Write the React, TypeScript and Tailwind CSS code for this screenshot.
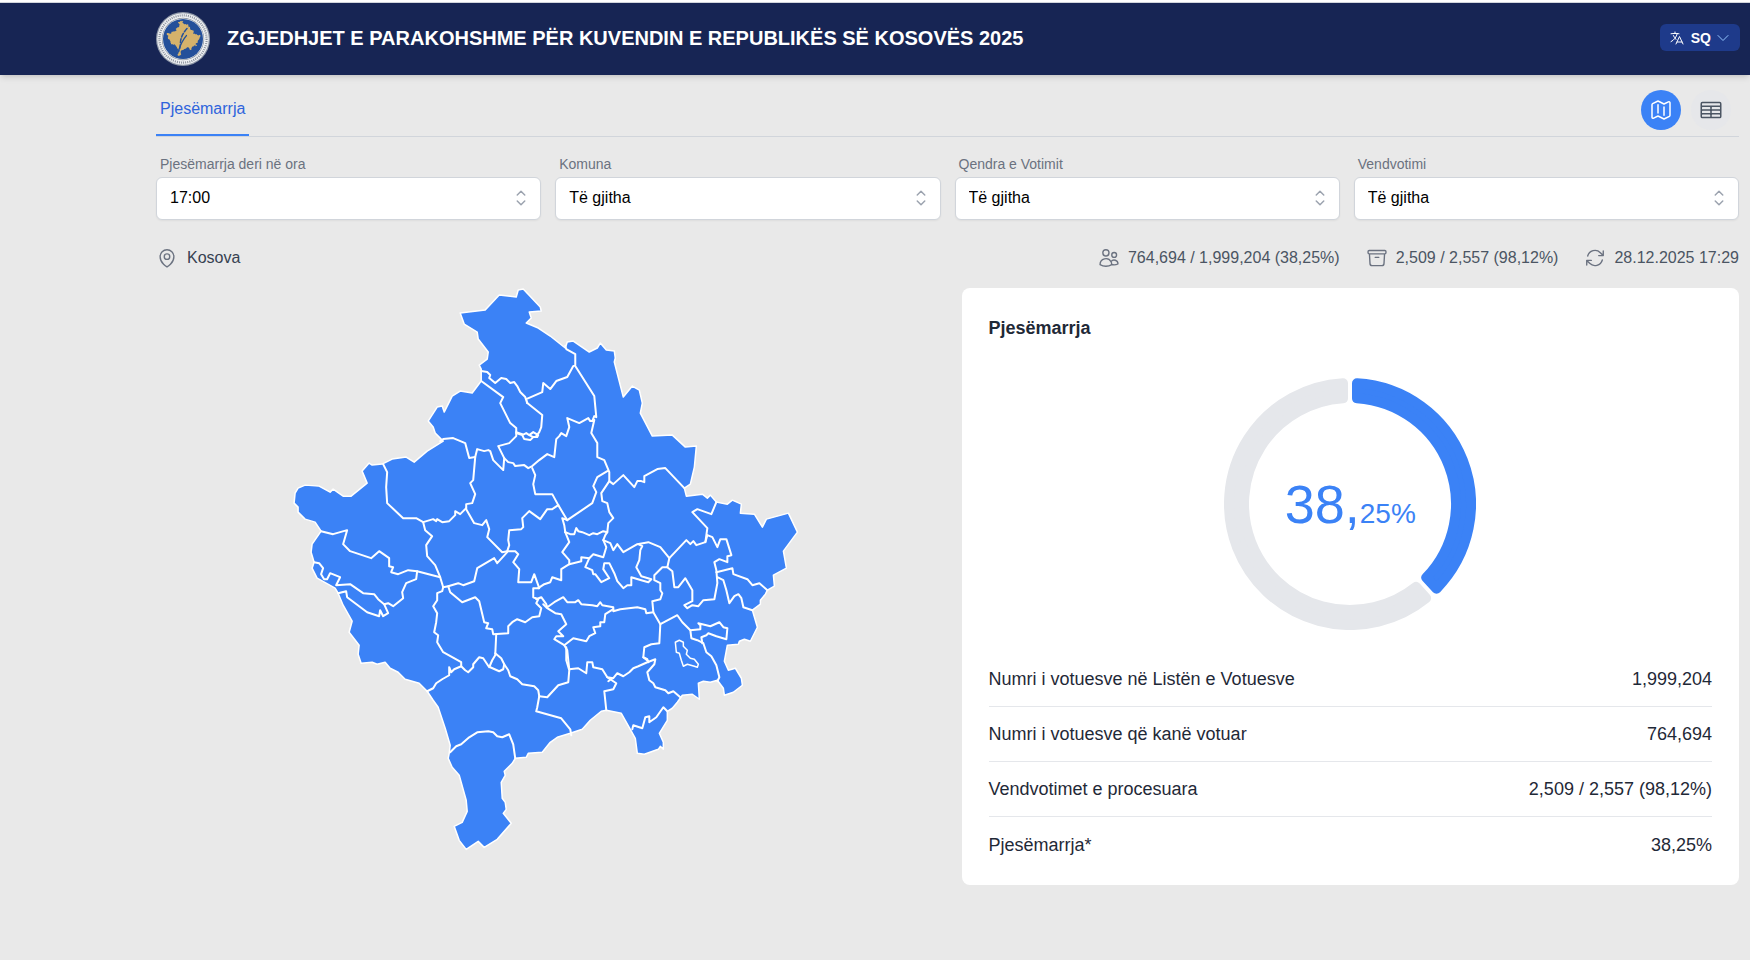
import { useState } from 'react';
import {
    HiOutlineArchiveBox,
    HiOutlineArrowPath,
    HiOutlineChevronDown,
    HiOutlineChevronUpDown,
    HiOutlineLanguage,
    HiOutlineMap,
    HiOutlineMapPin,
    HiOutlineTableCells,
    HiOutlineUsers,
} from 'react-icons/hi2';
import clsx from 'clsx';

const TURNOUT = 38.25;

const FILTERS = [
    { id: 'hour', label: 'Pjesëmarrja deri në ora', options: ['17:00'] },
    { id: 'municipality', label: 'Komuna', options: ['Të gjitha'] },
    { id: 'center', label: 'Qendra e Votimit', options: ['Të gjitha'] },
    { id: 'station', label: 'Vendvotimi', options: ['Të gjitha'] },
];

const STATS = [
    { icon: HiOutlineUsers, text: '764,694 / 1,999,204 (38,25%)' },
    { icon: HiOutlineArchiveBox, text: '2,509 / 2,557 (98,12%)' },
    { icon: HiOutlineArrowPath, text: '28.12.2025 17:29' },
];

const ROWS = [
    { label: 'Numri i votuesve në Listën e Votuesve', value: '1,999,204' },
    { label: 'Numri i votuesve që kanë votuar', value: '764,694' },
    { label: 'Vendvotimet e procesuara', value: '2,509 / 2,557 (98,12%)' },
    { label: 'Pjesëmarrja*', value: '38,25%' },
];

const COUNTRY =
    'M460 313 485 310 499 295 516 297 518 290 523 289 540 307 541 311 529 312 531 318 526 323 538 328 550 336 565 348 567 342 573 341 589 352 597 348 600 343 606 350 614 351 615 358 614 362 623 397 632 386 639 390 642 403 640 413 652 436 672 435 685 447 696 446 694 467 690 484 684 488 686 496 702 494 707 498 710 495 716 502 727 504 732 500 741 504 740 513 754 514 762 527 766 519 788 513 797 532 783 551 786 568 773 575 774 586 767 590 765 594 760 600 760 604 752 610 757 627 750 641 744 639 739 641 738 644 727 645 724 661 728 670 735 668 741 678 742 685 733 692 724 695 723 688 717 680 710 682 703 681 698 683 699 699 692 694 682 695 677 702 672 708 667 711 667 720 659 733 663 742 663 749 660 746 658 749 644 754 637 753 635 738 630 729 621 713 606 710 601 711 590 720 582 729 570 733 557 737 550 742 542 752 528 753 526 757 515 758 512 763 504 771 505 775 501 782 502 798 505 802 506 809 503 813 511 823 497 839 484 847 478 841 466 849 459 840 454 826 462 822 467 811 466 800 459 775 452 767 448 758 449 753 450 745 445 728 438 707 433 700 427 691 419 683 405 679 398 672 390 668 385 662 377 664 372 662 361 663 358 654 359 645 349 632 352 621 343 605 338 593 335 588 317 578 312 568 314 562 311 552 312 544 321 531 315 522 305 519 298 512 298 507 294 503 295 493 298 488 305 485 319 486 330 492 333 489 343 496 351 496 367 483 362 471 369 463 372 465 382 464 392 459 406 457 414 462 427 451 443 441 435 433 433 427 428 421 437 407 442 406 444 412 452 396 460 391 472 393 481 381 481 369 479 365 487 359 488 352 478 339 477 332 464 324Z';

// municipality boundaries, drawn over the country shape
const BORDERS = [
    'M481 371 487 372 490 375 489 378 495 383 501 378 506 379 510 383 514 382 517 386 520 392 525 397 527 403 526 399 542 392 543 383 550 389 556 381 567 377 573 366 575 365 575 354 566 349 565 346',
    'M481 381 503 397 500 403 510 423 516 428 516 432 522 434 M536 436 539 432 541 427 542 415 527 403',
    'M516 432 516 436 509 443 498 446 504 458 508 462 513 463 515 466 524 465 528 468 532 466 539 460 547 454 554 457 556 439 559 436 561 433 566 436 569 427 567 418 579 423 588 418 590 421 592 421 594 416 596 417 594 396 575 366',
    'M516 433 522 435 526 433 529 435 533 432 538 435 537 437 532 437 M522 435 524 439 530 440 533 437 529 435',
    'M594 420 591 433 597 443 597 457 604 460 609 472 609 481 601 493 602 501 607 503 609 512 613 518 608 523 607 532 603 531 597 534 593 533 589 535 582 532 578 531 576 528 574 534 570 534 565 532',
    'M565 532 564 525 562 518 567 520 592 503 596 492 593 486 597 477 607 471',
    'M609 481 613 484 623 475 634 487 637 481 641 481 644 482 644 476 657 469 665 468 684 488',
    'M532 468 535 475 533 484 535 494 552 494 558 505 567 520',
    'M558 505 552 509 547 509 540 519 529 511 522 518 523 527 521 529 509 530 508 540 509 545 507 551 502 552 487 537 489 529 486 520 482 525 474 523 466 509',
    'M504 458 503 470 493 460 490 451 488 450 484 451 477 449 475 457 473 480 470 483 475 494 472 503 466 504 466 508',
    'M475 457 469 458 465 443 453 438 443 439 440 441',
    'M383 464 387 472 386 487 387 503 403 518 416 518 423 522 433 519 436 521 437 519 442 522 449 521 455 515 455 511 460 514 466 508',
    'M423 522 425 530 432 536 426 545 427 556 435 565 440 577',
    'M321 531 333 534 347 530 343 544 350 551 371 558 379 551 389 558 389 566 393 567 391 572 398 574 408 570 417 571 440 577 443 587 448 586 458 583 463 585 474 581 477 568 494 558 497 563 507 552',
    'M443 587 442 591 437 593 437 600 433 606 437 613 436 622 434 632 438 635 437 642 443 652 461 662 461 666 454 669 451 672 449 667 449 675 442 679 436 683 433 688 427 691',
    'M461 666 465 670 468 672 473 667 473 664 479 657 483 658 489 667 492 660 495 655 496 634',
    'M495 653 501 658 504 664 503 669 499 671 490 667',
    'M504 664 508 670 510 676 517 679 522 684 534 686 538 690 539 696 537 707 536 711 561 718 570 729 571 735',
    'M539 696 547 697 558 685 568 682 569 670 566 660 566 647',
    'M448 586 450 592 462 602 475 597 479 601 484 622 488 623 486 628 492 629 493 634 508 633 508 626 512 622 517 619 525 622 532 617 539 616 541 608 536 603 538 599 533 597 533 588 539 588 534 574 531 582 518 582 519 569 513 562 518 554 515 551 507 551',
    'M538 588 544 584 550 582 552 577 561 580 561 569 569 564 569 560 562 552 569 542 565 532',
    'M569 564 581 561 581 557 589 558 593 554 603 557 606 547 603 540 605 535 607 532',
    'M603 540 610 543 613 550 617 544 623 552 637 544 648 542 660 547 669 558 686 540 690 544 693 541 696 545 705 542 707 528 692 512 697 509 711 514 716 502',
    'M589 558 585 567 592 570 593 574 595 574 601 582 609 578 603 569 604 563 609 563 614 573 617 581 623 588 627 585 631 585 631 577 641 580 648 582 651 579 641 576 636 567 639 560 640 550 642 546 638 544',
    'M669 558 667 567 662 567 654 575 654 580 660 583 660 590 662 593 660 599 652 601 653 612 660 624 659 643 651 644 644 647 643 657 648 661',
    'M667 567 672 571 674 587 678 587 685 578 692 590 692 601 684 605 687 608 692 605 698 606 703 600 714 599 717 583 716 570 714 562 719 559 727 562 727 556 731 555 726 539 720 539 717 547 712 537 707 535 705 542',
    'M716 572 732 568 733 574 747 579 752 585 759 583 767 590',
    'M717 577 723 580 726 590 729 603 734 596 738 594 741 598 743 607 752 610',
    'M536 599 541 597 546 604 547 607 554 602 563 597 567 602 575 602 578 600 581 604 592 605 597 606 600 602 602 605 613 607 613 611 620 609 637 607 645 609 646 613 653 612',
    'M613 609 605 614 604 622 600 622 600 626 593 627 595 633 589 636 586 641 573 638 564 645 554 639 556 636 563 636 558 631 566 624 561 614 555 613 547 608 543 604',
    'M564 645 567 650 568 660 569 669 578 668 586 673 587 662 592 662 593 667 602 669 607 677 613 678 617 673 623 676 629 672 633 668 638 666 647 662 655 659 654 664 647 672 649 680 653 683 655 687 665 690 668 693 673 691 680 697',
    'M643 657 647 659 648 662 M660 624 677 615 682 622 690 630 691 638 697 640 703 643 706 652 711 656 716 665 719 677 717 681',
    'M607 677 616 683 613 689 604 691 606 710 M612 678 608 681',
    'M632 729 633 725 642 728 645 717 649 716 649 722 656 717 663 707 667 711',
    'M690 630 700 629 700 625 698 623 710 626 719 622 723 627 727 628 726 639 716 636 708 633 706 635 701 637 702 643',
    'M314 562 319 563 323 568 321 574 324 579 327 579 330 573 340 577 336 585 350 584 363 593 374 594 378 599 384 604 388 603 393 606 403 598 402 592 406 583 416 579 417 571',
    'M338 593 346 591 347 597 367 612 379 616 380 610 383 616 388 613 384 604',
    'M450 752 456 746 461 744 469 737 477 732 488 731 493 732 497 736 502 737 509 734 513 744 515 758',
];

const ENCLAVE =
    'M675 642 679 640 683 642 683 646 687 650 686 654 690 658 694 659 698 664 697 667 694 666 687 664 683 666 681 660 679 653 676 652Z';

function MunicipalityMap() {
    return (
        <svg viewBox="156 288 777 564" className="w-full" role="img" aria-label="Kosova">
            <path d={COUNTRY} fill="#3b82f6" stroke="#ffffff" strokeWidth="1.5" strokeLinejoin="round" />
            <g fill="none" stroke="#ffffff" strokeWidth="2" strokeLinejoin="round" strokeLinecap="round">
                {BORDERS.map((d, i) => (
                    <path key={i} d={d} />
                ))}
            </g>
            <path d={ENCLAVE} fill="none" stroke="#ffffff" strokeWidth="1.5" strokeLinejoin="round" />
        </svg>
    );
}

function Emblem() {
    return (
        <svg viewBox="0 0 54 54" className="size-[54px] shrink-0" aria-hidden="true">
            <circle cx="27" cy="27" r="27" fill="#8f98a8" />
            <circle cx="27" cy="27" r="25.8" fill="#eef0f2" />
            <circle cx="27" cy="27" r="23.6" fill="none" stroke="#8b929e" strokeWidth="2.2" strokeDasharray="1 1.1" />
            <circle cx="27" cy="27" r="21.2" fill="#7d8694" />
            <circle cx="27" cy="27" r="20.6" fill="#f3f4f5" />
            <circle cx="27" cy="27" r="20" fill="#24509a" />
            <g transform="translate(-9.200 -9.500) scale(0.0675 0.063)">
                <path d={COUNTRY} fill="#d5b26b" />
            </g>
            <g fill="none" stroke="#24509a" strokeLinecap="round">
                <path d="M31 16.500c-3.500 4-5.800 8-6.400 12.500-.4 3.500-.2 7-2 10.500" strokeWidth="1.500" strokeDasharray="4 2" />
                <path d="M18.500 33c1.200 1.800 2.700 3.500 3.700 6.500 2-6 4.800-12 8.300-16" strokeWidth="1.200" />
            </g>
        </svg>
    );
}

// The ring segment is inset by 5 on every side, a 10 wide round-joined stroke fills it out again.
function arc(from: number, to: number) {
    const outer = 121;
    const inner = 106;
    const point = (r: number, turn: number, pad: number) => {
        const a = turn * 2 * Math.PI + pad;
        return `${(126 + r * Math.sin(a)).toFixed(2)} ${(126 - r * Math.cos(a)).toFixed(2)}`;
    };
    const po = Math.asin(7 / outer);
    const pi = Math.asin(7 / inner);
    const large = to - from > 0.5 ? 1 : 0;
    return `M${point(outer, from, po)}A${outer} ${outer} 0 ${large} 1 ${point(outer, to, -po)}L${point(inner, to, -pi)}A${inner} ${inner} 0 ${large} 0 ${point(inner, from, pi)}Z`;
}

function TurnoutDonut({ value }: { value: number }) {
    const [whole, rest] = value.toFixed(2).split('.');
    return (
        <div className="relative size-[252px]">
            <svg viewBox="0 0 252 252" className="size-full" strokeWidth="10" strokeLinejoin="round">
                <path d={arc(0, value / 100)} className="fill-[#3b82f6] stroke-[#3b82f6]" />
                <path d={arc(value / 100, 1)} className="fill-[#e5e7eb] stroke-[#e5e7eb]" />
            </svg>
            <div className="absolute inset-0 flex items-center justify-center text-[#3b82f6]">
                <p className="text-[54px] leading-none">
                    {whole},<span className="text-[28px]">{rest}%</span>
                </p>
            </div>
        </div>
    );
}

function Filter({ id, label, options }: { id: string; label: string; options: string[] }) {
    return (
        <div>
            <label htmlFor={id} className="block pl-1 text-sm text-[#6b7280]">
                {label}
            </label>
            <div className="relative mt-[3px]">
                <select
                    id={id}
                    className="h-[43px] w-full appearance-none rounded-md border border-[#d1d5db] bg-white pl-[13px] pr-10 pb-0.5 text-base text-black shadow-xs"
                >
                    {options.map(o => (
                        <option key={o}>{o}</option>
                    ))}
                </select>
                <HiOutlineChevronUpDown className="pointer-events-none absolute right-2 top-[9px] size-6 text-[#9ca3af]" />
            </div>
        </div>
    );
}

export default function App() {
    const [view, setView] = useState<'map' | 'table'>('map');

    return (
        <div className="min-h-screen border-b border-t-2 border-white bg-[#e9e9e9] font-['Liberation_Sans',Arial,sans-serif]">
            <header className="flex h-[73px] items-center border-t border-gray-300 bg-[#172554] pl-[156px] pr-[10px] shadow-md">
                <Emblem />
                <h1 className="ml-[17px] pb-0.5 text-[20px] font-bold text-white">
                    ZGJEDHJET E PARAKOHSHME PËR KUVENDIN E REPUBLIKËS SË KOSOVËS 2025
                </h1>
                <button className="mb-[3px] ml-auto flex h-[27px] items-center rounded-md bg-[#1e3a8a] px-[9px] text-sm font-bold text-white">
                    <HiOutlineLanguage className="size-4" />
                    <span className="ml-[6px]">SQ</span>
                    <HiOutlineChevronDown className="ml-1 size-4 text-[#93c5fd]" />
                </button>
            </header>

            <main className="pl-[156px] pr-[11px]">
                <div className="flex h-[62px] items-stretch justify-between border-b border-[#d1d5db]">
                    <nav className="flex">
                        <a
                            href="#pjesemarrja"
                            className="flex items-center border-b-2 border-[#3b82f6] px-1 pt-2 text-base text-[#2f64dc]"
                        >
                            Pjesëmarrja
                        </a>
                    </nav>
                    <div className="mr-2 flex items-center gap-[10px] pt-2">
                        <button
                            aria-label="Harta"
                            onClick={() => setView('map')}
                            className={clsx(
                                'flex size-10 items-center justify-center rounded-full',
                                view === 'map' ? 'bg-[#3b82f6] text-white' : 'bg-[#e6e7ea] text-[#4b5563]'
                            )}
                        >
                            <HiOutlineMap className="size-6" />
                        </button>
                        <button
                            aria-label="Tabela"
                            onClick={() => setView('table')}
                            className={clsx(
                                'flex size-10 items-center justify-center rounded-full',
                                view === 'table' ? 'bg-[#3b82f6] text-white' : 'bg-[#e6e7ea] text-[#4b5563]'
                            )}
                        >
                            <HiOutlineTableCells className="size-6" />
                        </button>
                    </div>
                </div>

                <div className="mt-[17px] grid grid-cols-4 gap-[14px]">
                    {FILTERS.map(f => (
                        <Filter key={f.id} {...f} />
                    ))}
                </div>

                <div className="mt-[26px] flex items-center text-base text-[#4b5563]">
                    <HiOutlineMapPin className="size-[22px] text-[#6b7280]" />
                    <span className="ml-[9px] text-[#374151]">Kosova</span>
                    <div className="ml-auto flex gap-[26px]">
                        {STATS.map(({ icon: Icon, text }) => (
                            <div key={text} className="flex items-center gap-2">
                                <Icon className="size-[22px] text-[#6b7280]" />
                                <span>{text}</span>
                            </div>
                        ))}
                    </div>
                </div>

                <div className="mt-[18px] grid grid-cols-2 items-start gap-7">
                    <MunicipalityMap />

                    <section className="rounded-lg bg-white px-[27px] pb-[13px] pt-[26px] text-lg text-[#1f2937]">
                        <h2 className="font-bold">Pjesëmarrja</h2>
                        <div className="mt-9 flex justify-center">
                            <TurnoutDonut value={TURNOUT} />
                        </div>
                        <dl className="mt-[22px] divide-y divide-[#e5e7eb]">
                            {ROWS.map(row => (
                                <div key={row.label} className="flex h-[55px] items-center justify-between">
                                    <dt>{row.label}</dt>
                                    <dd>{row.value}</dd>
                                </div>
                            ))}
                        </dl>
                    </section>
                </div>
            </main>
        </div>
    );
}
